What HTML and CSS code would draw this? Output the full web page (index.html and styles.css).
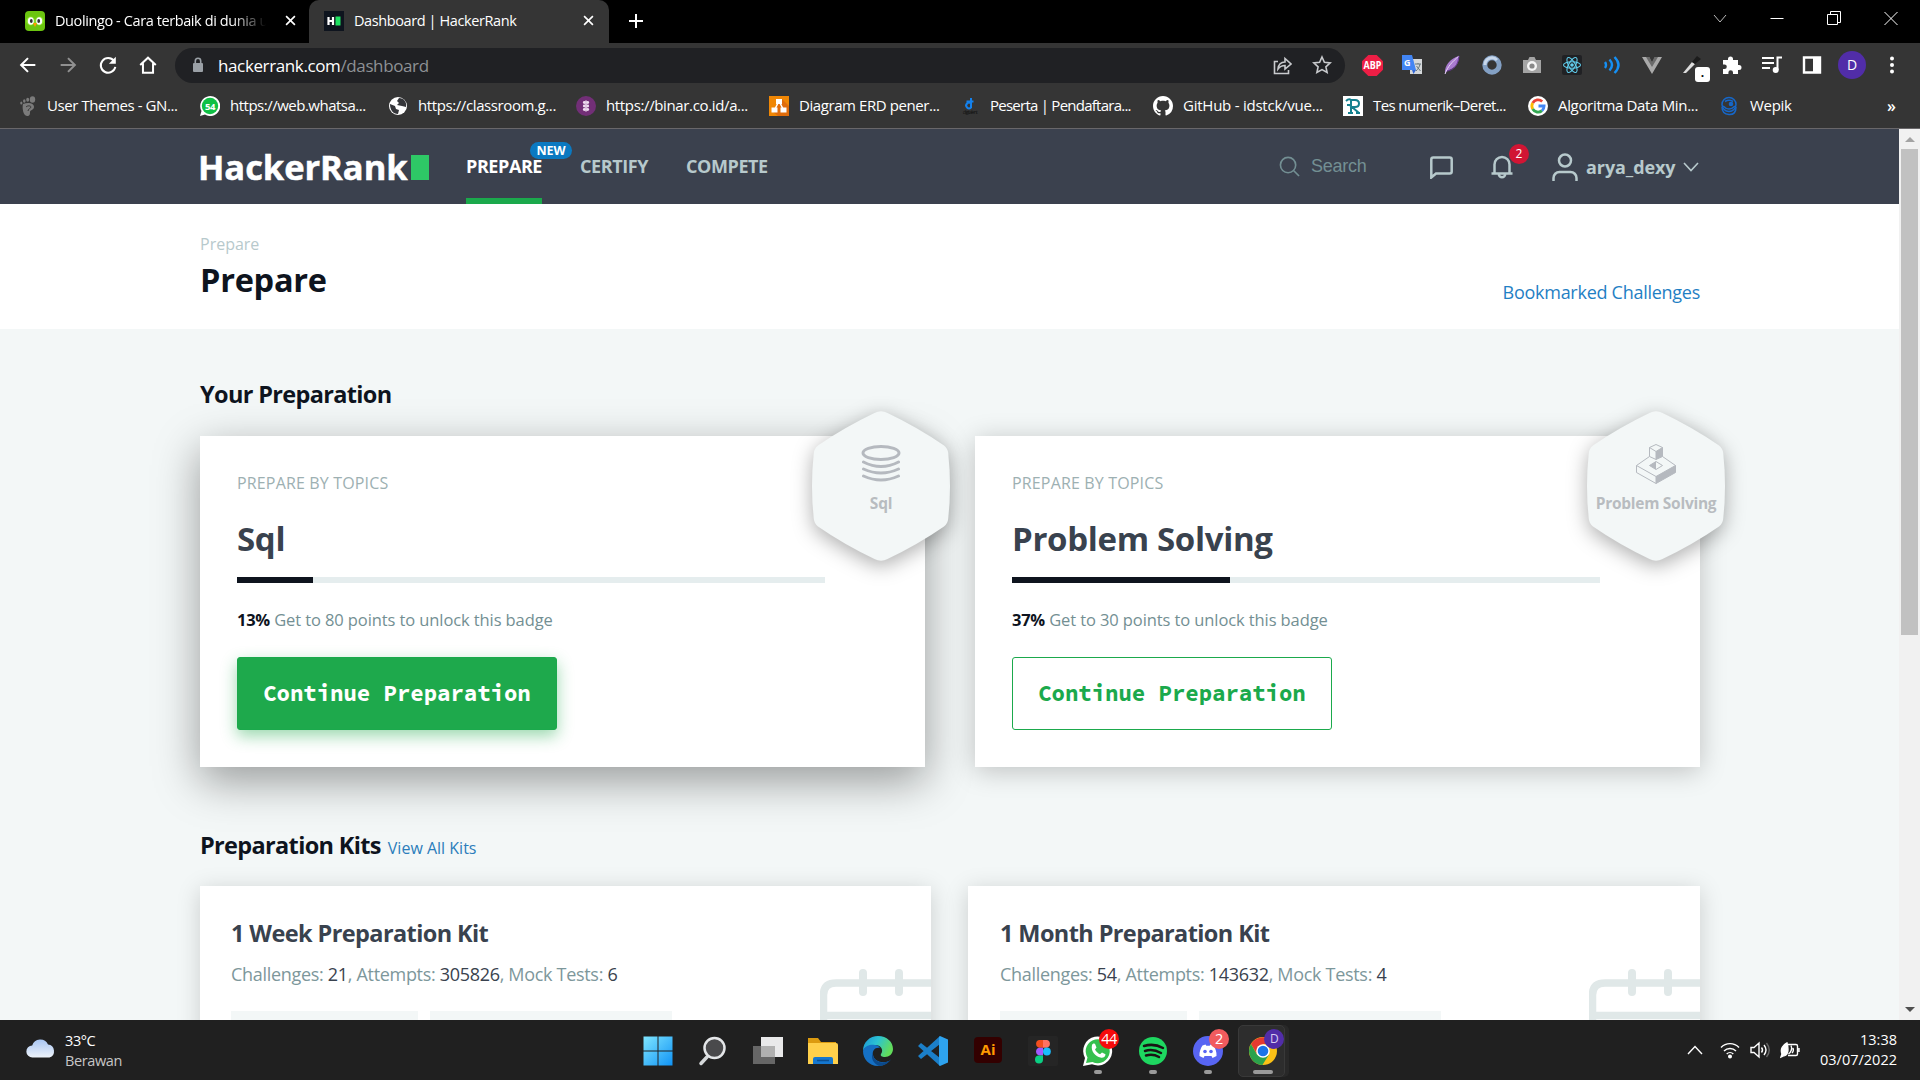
FILE: index.html
```html
<!DOCTYPE html>
<html lang="id">
<head>
<meta charset="utf-8">
<title>Dashboard | HackerRank</title>
<link rel="stylesheet" href="styles.css">
</head>
<body>
<div class="tabs">
  <div class="tab">
    <svg class="fav" viewBox="0 0 20 20"><rect width="20" height="20" rx="4" fill="#6cc510"/><circle cx="5.6" cy="10" r="4.4" fill="#8be02b"/><circle cx="14.4" cy="10" r="4.4" fill="#8be02b"/><ellipse cx="5.8" cy="10" rx="3" ry="3.8" fill="#fff"/><ellipse cx="14.2" cy="10" rx="3" ry="3.8" fill="#fff"/><ellipse cx="6.3" cy="10" rx="1.4" ry="2" fill="#333"/><ellipse cx="13.7" cy="10" rx="1.4" ry="2" fill="#333"/><path d="M8 12h4l-2 4z" fill="#ff9b00"/></svg>
    <span class="tab-title fade">Duolingo - Cara terbaik di dunia u</span>
    <svg class="x" viewBox="0 0 10 10"><path d="M1 1l8 8M9 1l-8 8"/></svg>
  </div>
  <div class="tab active">
    <svg class="fav" viewBox="0 0 20 20"><rect width="20" height="20" fill="#0e141e"/><path d="M4.500 6v8M9 6v8M4.500 10h4.500" stroke="#fff" stroke-width="2.200"/><path d="M11.500 5.500h5v9h-5z" fill="#1ee161"/></svg>
    <span class="tab-title">Dashboard | HackerRank</span>
    <svg class="x" viewBox="0 0 10 10"><path d="M1 1l8 8M9 1l-8 8"/></svg>
  </div>
  <svg class="plus" viewBox="0 0 16 16"><path d="M8 1v14M1 8h14"/></svg>
  <div class="win">
    <svg viewBox="0 0 16 16"><path d="M2 5l6 7 6-7" stroke="#bbb"/></svg>
    <svg viewBox="0 0 16 16"><path d="M1.500 8.500h13"/></svg>
    <svg viewBox="0 0 16 16"><path d="M1.500 4.500h10v10h-10zM4.500 4.500v-3h10v11h-3"/></svg>
    <svg viewBox="0 0 16 16"><path d="M1.500 2l13 13M14.500 2l-13 13"/></svg>
  </div>
</div>
<div class="toolbar">
  <svg class="cell" viewBox="0 0 24 24"><path d="M20 12H5M12 4.500L4.500 12l7.500 7.500" class="w"/></svg>
  <svg class="cell dim" viewBox="0 0 24 24"><path d="M4 12h15M12 4.500l7.500 7.500-7.500 7.500" class="w"/></svg>
  <svg class="cell" viewBox="0 0 24 24"><path d="M18.500 7.500A8 8 0 1 0 20 14" class="w"/><path d="M20.500 3v7.500H13z" fill="#fff"/></svg>
  <svg class="cell" viewBox="0 0 24 24"><path d="M3.500 12L12 4l8.500 8M6.500 10v10.500h11V10" class="w"/></svg>
  <div class="omnibox">
    <svg class="lock" viewBox="0 0 12 16"><rect x="1" y="6" width="10" height="9" rx="1" fill="#9aa0a6"/><path d="M3.300 6V4a2.700 2.700 0 0 1 5.400 0v2" fill="none" stroke="#9aa0a6" stroke-width="1.600"/></svg>
    <span class="url">hackerrank.com<em>/dashboard</em></span>
    <svg class="oi" viewBox="0 0 20 20"><path d="M6 6.500H2.500v12H16.500V15M6 14c.5-5 3.500-7 7-7V3.500L19 9l-6 5v-3.500c-3 0-5 .8-7 3.500z"/></svg>
    <svg class="oi" viewBox="0 0 20 20"><path d="M10 2l2.400 5.300 5.800.6-4.300 3.900 1.200 5.700L10 14.600l-5.100 2.900 1.200-5.700L1.800 7.900l5.800-.6z"/></svg>
  </div>
  <div class="ext">
    <div class="cell"><svg class="big" viewBox="0 0 20 20"><path d="M6 0h8l6 6v8l-6 6H6l-6-6V6z" fill="#ed1e45"/><text x="10" y="13.700" text-anchor="middle" font-size="9.500" textLength="17" lengthAdjust="spacingAndGlyphs" font-weight="700" fill="#fff">ABP</text></svg></div>
    <div class="cell"><svg viewBox="0 0 20 20"><rect x="8" y="4" width="12" height="15" fill="#d5d8da"/><path d="M0 0h10l4 15H0z" fill="#4285f4"/><path d="M10 15h4l-2.500 4z" fill="#3367d6"/><text x="2" y="11" font-size="9" font-weight="700" fill="#fff">G</text><path d="M13 9h6M16 8v1M14 16c2-2 3.500-4 4-7M14.500 11l4 5" stroke="#66777d" fill="none"/></svg></div>
    <div class="cell"><svg viewBox="0 0 20 20"><path d="M3 19C2 10 9 3 17 1c0 8-4 12-12 15z" fill="#a97bd0"/><path d="M3 19C6 11 10 7 17 1" stroke="#e6d4f4" fill="none"/><path d="M5 16c7-1 11-6 12-15" stroke="#6a3a99" fill="none"/></svg></div>
    <div class="cell"><svg viewBox="0 0 20 20"><circle cx="10" cy="10" r="7.200" fill="none" stroke="#83a0c4" stroke-width="5"/><path d="M3 10a7 7 0 0 1 12-5" fill="none" stroke="#c8d8ec" stroke-width="3"/></svg></div>
    <div class="cell"><svg viewBox="0 0 20 20"><path d="M1 5h5l1.500-3h5L14 5h5v13H1z" fill="#a4a4a4"/><circle cx="10" cy="11" r="5" fill="#f5f5f5"/><circle cx="10" cy="11" r="2.600" fill="#888"/></svg></div>
    <div class="cell"><svg viewBox="0 0 20 20"><rect width="20" height="20" rx="2" fill="#202124"/><g fill="none" stroke="#61cfee" stroke-width="1.100"><ellipse cx="10" cy="10" rx="8.500" ry="3.300"/><ellipse cx="10" cy="10" rx="8.500" ry="3.300" transform="rotate(60 10 10)"/><ellipse cx="10" cy="10" rx="8.500" ry="3.300" transform="rotate(120 10 10)"/></g><circle cx="10" cy="10" r="1.800" fill="#61cfee"/></svg></div>
    <div class="cell"><svg viewBox="0 0 20 20"><path d="M3 7q2 3 0 6M7.500 4.500q5 5.500 0 11M12.500 2q8 8 0 16" fill="none" stroke="#1590f5" stroke-width="2.400"/></svg></div>
    <div class="cell"><svg viewBox="0 0 20 20"><path d="M0 2h7l3 6 3-6h7L10 19z" fill="#aaa"/><path d="M4 2h3.500L10 7l2.500-5H16l-6 10z" fill="#6b6b6b"/></svg></div>
    <div class="cell pen"><svg viewBox="0 0 20 20"><path d="M1 18L10 7l3 2L4 18z" fill="#ddd"/><path d="M10 7l5-6 4 3-6 5z" fill="#1c1c1c"/></svg><b class="chip">.</b></div>
    <div class="cell"><svg viewBox="0 0 20 20"><path d="M1 5h5V4a2.500 2.500 0 0 1 5 0v1h5v5h1a2.500 2.500 0 0 1 0 5h-1v4h-5v-1.500a2.300 2.300 0 0 0-4.600 0V19H1v-5h1.500a2.300 2.300 0 0 0 0-4.600H1z" fill="#fff"/></svg></div>
    <div class="cell"><svg viewBox="0 0 20 20"><path d="M0 3h12M0 8h12M0 13h8M15.500 15V2.500H20" fill="none" stroke="#fff" stroke-width="2"/><circle cx="13.700" cy="15" r="3" fill="#fff"/></svg></div>
    <div class="cell"><svg viewBox="0 0 20 20"><path d="M2 2.500h16v15H2z" fill="none" stroke="#fff" stroke-width="2.400"/><path d="M11 2h7v16h-7z" fill="#fff"/></svg></div>
    <div class="cell"><span class="avatar">D</span></div>
    <div class="cell"><svg viewBox="0 0 20 20" fill="#fff"><circle cx="10" cy="3.500" r="2"/><circle cx="10" cy="10" r="2"/><circle cx="10" cy="16.500" r="2"/></svg></div>
  </div>
</div>
<div class="bookmarks">
  <div class="bm b1"><svg viewBox="0 0 20 20" fill="#7b7b7b"><path d="M5 8c5-2 11-1 11 3 0 3-4 3-4 5s0 4-3 4c-4 0-5-9-4-12z"/><ellipse cx="14.500" cy="3.500" rx="2.700" ry="3.300"/><ellipse cx="9.700" cy="3.800" rx="1.500" ry="2"/><ellipse cx="6.300" cy="5" rx="1.300" ry="1.800"/><ellipse cx="3.300" cy="7" rx="1.100" ry="1.600"/><path d="M8 11c2-2 5-1 5 0s-3 2-3 4" fill="none" stroke="#353535"/></svg><span>User Themes - GN...</span></div>
  <div class="bm b2"><svg viewBox="0 0 20 20"><path d="M0 20l1.500-5A10 10 0 1 1 5 18.600z" fill="#fff"/><circle cx="10" cy="10" r="8.200" fill="#10c045"/><text x="10" y="13.500" text-anchor="middle" font-size="9.500" font-weight="700" fill="#fff">54</text></svg><span>https://web.whatsa...</span></div>
  <div class="bm b3"><svg viewBox="0 0 20 20"><circle cx="10" cy="10" r="9" fill="#fff"/><path d="M2 8l5 2 1 3 3 1-1 4c-5 0-8-4-8-10zM11 2l-2 3 2 2-2 2 5 1 4 1c1-5-2-9-7-9z" fill="#35363a"/></svg><span>https://classroom.g...</span></div>
  <div class="bm b4"><svg viewBox="0 0 20 20"><circle cx="10" cy="10" r="10" fill="#722f77"/><path d="M10 4.500v11" stroke="#f1dff2" stroke-width="1.500"/><g fill="#f1dff2"><circle cx="8.300" cy="6.500" r="1.400"/><circle cx="11.700" cy="6.500" r="1.400"/><circle cx="8.300" cy="10" r="1.400"/><circle cx="11.700" cy="10" r="1.400"/><circle cx="8.300" cy="13.500" r="1.400"/><circle cx="11.700" cy="13.500" r="1.400"/></g></svg><span>https://binar.co.id/a...</span></div>
  <div class="bm b5"><svg viewBox="0 0 20 20"><path d="M0 0h20v20H0z" fill="#f08705"/><path d="M13 3l7 7v10H9l-6-5z" fill="#df6c0c"/><path d="M10 5L5.500 14M10 5l4.500 9" stroke="#fff" stroke-width="1.600"/><path d="M7 3h6v5H7zM2.500 11.500h6v5h-6zM11.500 11.500h6v5h-6z" fill="#fff"/></svg><span>Diagram ERD pener...</span></div>
  <div class="bm b6"><svg viewBox="0 0 20 20"><path d="M11 2v10M6.500 5.500h7M11 11.500a2.800 2.800 0 1 1 0-4" fill="none" stroke="#1481ec" stroke-width="2"/><text x="10" y="18" text-anchor="middle" font-size="5" fill="#111">digitalent</text></svg><span>Peserta | Pendaftara...</span></div>
  <div class="bm b7"><svg viewBox="0 0 16 16"><path fill="#fff" d="M8 0C3.580 0 0 3.580 0 8c0 3.540 2.290 6.530 5.470 7.590.4.070.55-.17.55-.38 0-.19-.01-.82-.01-1.490-2.010.37-2.530-.49-2.690-.94-.09-.23-.48-.94-.82-1.130-.28-.15-.68-.52-.01-.53.63-.01 1.080.58 1.230.82.72 1.210 1.870.87 2.330.66.070-.52.28-.87.51-1.070-1.780-.2-3.640-.89-3.640-3.950 0-.87.31-1.590.82-2.150-.08-.2-.36-1.020.08-2.120 0 0 .67-.21 2.200.82.640-.18 1.320-.27 2-.27s1.360.09 2 .27c1.530-1.040 2.200-.82 2.200-.82.44 1.100.16 1.920.08 2.120.51.56.82 1.270.82 2.150 0 3.070-1.870 3.750-3.650 3.950.29.25.54.73.54 1.480 0 1.070-.01 1.930-.01 2.200 0 .21.15.46.55.38A8.010 8.010 0 0 0 16 8c0-4.420-3.580-8-8-8z"/></svg><span>GitHub - idstck/vue...</span></div>
  <div class="bm b8"><svg viewBox="0 0 20 20"><path d="M0 0h20v20H0z" fill="#fff"/><path d="M8 16V4h4q4 0 4 3.500T12 11H9l7 6M3 5q3-3 5-1M4 9h3M5 17h5M13 17h4" fill="none" stroke="#14808f" stroke-width="2"/></svg><span>Tes numerik–Deret...</span></div>
  <div class="bm b9"><svg viewBox="0 0 20 20"><circle cx="10" cy="10" r="10" fill="#fff"/><g fill="none" stroke-width="2.800"><path d="M14.200 5.500A6.100 6.100 0 0 0 4.700 7" stroke="#ea4335"/><path d="M4.700 7a6.100 6.100 0 0 0 0 6" stroke="#fbbc05"/><path d="M4.700 13a6.100 6.100 0 0 0 9.300 1.600" stroke="#34a853"/><path d="M14 14.600A6.100 6.100 0 0 0 16.100 10H10.500" stroke="#4285f4"/></g></svg><span>Algoritma Data Min...</span></div>
  <div class="bm b10"><svg viewBox="0 0 20 20"><g fill="none" stroke="#1667c9" stroke-width="1.500"><circle cx="9" cy="8.500" r="7"/><path d="M2 11q0 7 7 7.500t7-7.500M3 10q6 6 12 0M5 5.500q4-2.500 8 0"/></g><circle cx="11" cy="8" r="2.300" fill="#1667c9"/></svg><span>Wepik</span></div>
  <span class="more">»</span>
</div>

<div class="viewport">
  <div class="page">
    <header class="hr-nav">
      <div class="wrap nav-row">
        <div class="logo"><span>HackerRank</span><i></i></div>
        <nav>
          <a class="on">PREPARE<sup>NEW</sup></a><a>CERTIFY</a><a>COMPETE</a>
        </nav>
        <div class="search"><svg viewBox="0 0 22 22"><circle cx="9.500" cy="9.500" r="8"/><path d="M15.500 15.500l5.500 5.500"/></svg><span>Search</span></div>
        <svg class="chat" viewBox="0 0 24 24"><path d="M2.300 22.500V4.500a2 2 0 0 1 2-2h16.400a2 2 0 0 1 2 2v12a2 2 0 0 1-2 2H7z"/></svg>
        <div class="bell"><svg viewBox="0 0 24 24"><path d="M1.500 18.500h21M4.500 18V9.500a7.500 7.500 0 0 1 15 0V18M8.800 19a3.200 3.200 0 0 0 6.400 0"/></svg><b>2</b></div>
        <svg class="user" viewBox="0 0 26 28"><circle cx="13" cy="7.500" r="6"/><path d="M1.500 28v-3a6 6 0 0 1 6-6h11a6 6 0 0 1 6 6v3"/></svg>
        <span class="uname">arya_dexy</span>
        <svg class="chev" viewBox="0 0 16 10"><path d="M1 1l7 7.500L15 1"/></svg>
      </div>
    </header>
    <section class="head">
      <div class="wrap head-row">
        <div><p class="crumb">Prepare</p><h1>Prepare</h1></div>
        <a class="marked">Bookmarked Challenges</a>
      </div>
    </section>
    <main class="wrap">
      <h2>Your Preparation</h2>
      <div class="topics">
        <article class="topic first">
          <p class="eyebrow">PREPARE BY TOPICS</p>
          <h3>Sql</h3>
          <div class="bar"><i style="width:13%"></i></div>
          <p class="pts"><b>13%</b> Get to 80 points to unlock this badge</p>
          <button class="btn solid">Continue Preparation</button>
          <div class="hex">
            <svg class="shape" viewBox="0 0 138 150"><path d="M62.500 2Q69 -1.500 75.500 2Q106 16.500 132 34.500Q135.500 37 136.200 42Q139.800 75 136.200 108Q135.500 113 132 115.500Q106 133.500 75.500 148Q69 151.500 62.500 148Q32 133.500 6 115.500Q2.500 113 1.800 108Q-1.800 75 1.800 42Q2.500 37 6 34.500Q32 16.500 62.500 2Z"/></svg>
            <svg class="glyph" viewBox="0 0 40 40"><g fill="none" stroke="#b5b9bf" stroke-width="3" stroke-linecap="round"><ellipse cx="20" cy="9" rx="18" ry="6.500"/><path d="M2.500 18q17.500 9 35 0M2.500 25q17.500 8 35 0M2.500 32q17.500 8 35 0"/></g></svg>
            <span>Sql</span>
          </div>
        </article>
        <article class="topic">
          <p class="eyebrow">PREPARE BY TOPICS</p>
          <h3>Problem Solving</h3>
          <div class="bar"><i style="width:37%"></i></div>
          <p class="pts"><b>37%</b> Get to 30 points to unlock this badge</p>
          <button class="btn">Continue Preparation</button>
          <div class="hex">
            <svg class="shape" viewBox="0 0 138 150"><path d="M62.500 2Q69 -1.500 75.500 2Q106 16.500 132 34.500Q135.500 37 136.200 42Q139.800 75 136.200 108Q135.500 113 132 115.500Q106 133.500 75.500 148Q69 151.500 62.500 148Q32 133.500 6 115.500Q2.500 113 1.800 108Q-1.800 75 1.800 42Q2.500 37 6 34.500Q32 16.500 62.500 2Z"/></svg>
            <svg class="glyph" viewBox="0 0 40 40"><g fill="none" stroke="#b5b9bf"><path d="M13.500 12.500L0.500 21.500v7L20 39.500l19.500-11v-7L26.500 12.500M.5 21.500L20 32.500l19.500-11M20 32.500v7"/><path d="M13.500 3.500L20 .5l6.500 3v9L20 15.500l-6.500-3zM13.500 3.500l6.500 4 6.500-4M20 7.500v8M13.500 21.500l6.500-4 6.500 4-6.500 4z"/></g><path d="M20 32.500l19.500-11v7L20 39.500zM20 7.500l6.500-4v9l-6.500 3zM13.500 21.500l6.500-4v8z" fill="#b5b9bf"/></svg>
            <span>Problem Solving</span>
          </div>
        </article>
      </div>
      <div class="kits-head"><h2>Preparation Kits</h2><a>View All Kits</a></div>
      <div class="kits">
        <article class="kit">
          <h4>1 Week Preparation Kit</h4>
          <p>Challenges: <b>21</b>, Attempts: <b>305826</b>, Mock Tests: <b>6</b></p>
          <div class="tags"><i></i><i></i></div>
          <svg class="cal" viewBox="0 0 111 60"><path d="M3.500 60V26Q3.500 14 16 14H111M3.500 46.500H111" fill="none" stroke="#e0e8e8" stroke-width="7.500"/><path d="M43 4v19M79 4v19" stroke="#e0e8e8" stroke-width="8" stroke-linecap="round"/></svg>
        </article>
        <article class="kit">
          <h4>1 Month Preparation Kit</h4>
          <p>Challenges: <b>54</b>, Attempts: <b>143632</b>, Mock Tests: <b>4</b></p>
          <div class="tags"><i></i><i></i></div>
          <svg class="cal" viewBox="0 0 111 60"><path d="M3.500 60V26Q3.500 14 16 14H111M3.500 46.500H111" fill="none" stroke="#e0e8e8" stroke-width="7.500"/><path d="M43 4v19M79 4v19" stroke="#e0e8e8" stroke-width="8" stroke-linecap="round"/></svg>
        </article>
      </div>
    </main>
  </div>
  <div class="scroll"><svg viewBox="0 0 20 20"><path d="M5 13h10l-5-5z" fill="#a3a3a3"/></svg><i></i><svg class="dn" viewBox="0 0 20 20"><path d="M5 7h10l-5 5z" fill="#505050"/></svg></div>
</div>

<footer class="taskbar">
  <div class="weather">
    <svg viewBox="0 0 30 20"><defs><linearGradient id="cl" x1="0" y1="0" x2="0" y2="1"><stop offset="0" stop-color="#a9c6f3"/><stop offset="1" stop-color="#eef3fa"/></linearGradient></defs><path d="M6.500 19.500a6 6 0 0 1-.3-12A8.500 8.500 0 0 1 22 6.500a6.700 6.700 0 0 1 1.500 13z" fill="url(#cl)"/></svg>
    <div><p>33°C</p><p class="g">Berawan</p></div>
  </div>
  <div class="apps">
    <div class="app"><svg viewBox="0 0 30 30"><defs><linearGradient id="wn" x1="0" y1="0" x2="1" y2="1"><stop offset="0" stop-color="#7fe6ff"/><stop offset="1" stop-color="#1093f5"/></linearGradient></defs><path d="M.5.500h14v14H.5zM15.500.500h14v14h-14zM.5 15.500h14v14H.5zM15.500 15.500h14v14h-14z" fill="url(#wn)"/></svg></div>
    <div class="app"><svg viewBox="0 0 30 30"><path d="M9 21L3 27.500" stroke="#d5d8da" stroke-width="3.500" stroke-linecap="round"/><circle cx="16.500" cy="12" r="10" fill="#4a4a4c" stroke="#e4e6e8" stroke-width="2.500"/></svg></div>
    <div class="app"><svg viewBox="0 0 30 30"><path d="M0 10h22v18H0z" fill="#666"/><path d="M8 1h22v20H8z" fill="#e9e9ea"/><path d="M8 10h14v11H8z" fill="#b0b0b0"/></svg></div>
    <div class="app"><svg viewBox="0 0 30 30"><path d="M0 2h10l3 4h15v8H0z" fill="#dc9b10"/><path d="M0 7h28q2 0 2 2v19H0z" fill="#ffd04b"/><path d="M5 28v-5q0-2 2-2h16q2 0 2 2v5z" fill="#1577cf"/><path d="M9 24.500h12" stroke="#0b4f92" stroke-width="1.500"/></svg></div>
    <div class="app"><svg viewBox="0 0 30 30"><defs><linearGradient id="eg" x1="0" y1="0" x2="1" y2=".4"><stop offset="0" stop-color="#1a93d8"/><stop offset=".5" stop-color="#2cc3d2"/><stop offset="1" stop-color="#62dc5b"/></linearGradient></defs><path d="M0 15C0 6 7 0 15 0c9 0 15 6 15 13 0 5-4 8-8 8-3 0-5-1-4-3 3-4 0-9-6-9C6 9 1 12 0 15z" fill="url(#eg)"/><path d="M0 15c1-4 6-7 12-6 2 0 4 1 5 3-5-1-8 3-7 7 1 6 9 9 16 6-3 4-8 5-11 5C6 30 0 23 0 15z" fill="#1570c4"/><path d="M10 17c-1 6 6 11 13 9 2 0 4-2 5-3-2 4-7 7-12 7-5-2-9-8-6-13z" fill="#0c4a8c"/></svg></div>
    <div class="app"><svg viewBox="0 0 30 30"><path d="M22 0v30L0 10l3-3 19 15V8L3 23l-3-3z" fill="#1b7fc9"/><path d="M22 0l8 3.500v23L22 30l-1-1V1z" fill="#2ea3ef"/></svg></div>
    <div class="app"><svg viewBox="0 0 30 30"><rect x="1" y="1" width="28" height="26" rx="4" fill="#330000"/><text x="15" y="19" text-anchor="middle" font-size="15" font-weight="700" fill="#ff9a00">Ai</text></svg></div>
    <div class="app"><svg viewBox="0 0 30 30"><rect width="30" height="30" rx="2" fill="#252525"/><path d="M15 4h-4a4 4 0 0 0 0 7.700h4z" fill="#f24e1e"/><path d="M15 4h4a4 4 0 0 1 0 7.700h-4z" fill="#ff7262"/><path d="M15 11.700h-4a4 4 0 0 0 0 7.700h4z" fill="#a259ff"/><circle cx="18.900" cy="15.500" r="3.900" fill="#1abcfe"/><path d="M15 19.400h-4a4 4 0 1 0 4 4z" fill="#0acf83"/></svg></div>
    <div class="app run"><svg viewBox="0 0 30 30"><path d="M0 30l2-8A14.500 14.500 0 1 1 9 28.300z" fill="#fff"/><path d="M3 27l1.500-5.500A12 12 0 1 1 9.500 26z" fill="#35c04e"/><path d="M9 9c1-2 3-2 3.500 0l1 2.500-1.500 2c1 2 3 4 5 4.700l2-1.700 3.500 1.700c0 3-3 4-5 3.300-5-1-10-6-8.500-12.500z" fill="#fff"/></svg><b class="n red">44</b></div>
    <div class="app run"><svg viewBox="0 0 30 30"><circle cx="15" cy="15" r="14" fill="#1ed760"/><path d="M6 10q10-3 19 2M7 15q8-2.500 16 2M8 19.500q7-2 13 1.500" fill="none" stroke="#191414" stroke-width="2.500" stroke-linecap="round"/></svg></div>
    <div class="app run"><svg viewBox="0 0 30 30"><circle cx="15" cy="15" r="15" fill="#5865f2"/><path d="M9.500 9.500l3-1 .8 1.300h3.400l.8-1.300 3 1c2 3 3.300 6.500 3 10.500L19.500 22l-1-2h-7l-1 2-4-2c-.3-4 1-7.500 3-10.500z" fill="#fff"/><circle cx="12" cy="15.500" r="1.800" fill="#5865f2"/><circle cx="18" cy="15.500" r="1.800" fill="#5865f2"/></svg><b class="n pink">2</b></div>
    <div class="app run cur"><svg viewBox="0 0 30 30"><circle cx="15" cy="15" r="14" fill="#fbc116"/><path d="M15 8h12.100A14 14 0 0 0 3 8l6 10z" fill="#e53a2f"/><path d="M2.900 8a14 14 0 0 0 11.500 21L21 18.500 9 18.500z" fill="#2ba24c"/><circle cx="15" cy="15" r="6.800" fill="#fff"/><circle cx="15" cy="15" r="5.300" fill="#1a73e8"/></svg><b class="n violet">D</b></div>
  </div>
  <div class="tray">
    <svg class="up" viewBox="0 0 16 10"><path d="M1 9l7-7.500L15 9"/></svg>
    <svg class="t1" viewBox="0 0 20 18"><path d="M1 6.500a12.500 12.500 0 0 1 18 0M4 10a8.500 8.500 0 0 1 12 0M6.700 13a4.700 4.700 0 0 1 6.600 0"/><circle cx="10" cy="15.500" r="1.300" fill="#fff"/></svg>
    <svg class="t2" viewBox="0 0 20 18"><path d="M1 6.500h3l5-4.500v14l-5-4.500H1zM11.500 6.500q2 2.500 0 5M14 4q4 5 0 10"/><path d="M16.500 2q5.500 7 0 14" stroke="#666"/></svg>
    <svg class="t3" viewBox="0 0 20 18"><path d="M8 3.500h8q1.500 0 1.500 1.500v8q0 1.500-1.500 1.500H8M19 7v4"/><path d="M7 2C3 4 0 8 2 13l-1 3 2-1c5 0 6-6 4-13z" fill="#fff"/><path d="M11 4.500c1.500 3 0 7-2.500 8.500M13 7q1 3-1 5"/></svg>
    <div class="clock"><p>13:38</p><p>03/07/2022</p></div>
  </div>
</footer>
</body>
</html>
```
FILE: styles.css
```css
* { box-sizing: border-box; }
body { margin: 0; width: 1920px; height: 1080px; overflow: hidden; display: flex; flex-direction: column; background: #000; font-family: "Open Sans", "Noto Sans", sans-serif; }
p, h1, h2, h3, h4 { margin: 0; }
svg { display: block; flex: none; }
svg text { font-family: "Open Sans", sans-serif; }

/* tab strip */
.tabs { height: 43px; flex: none; display: flex; align-items: stretch; color: #fff; font-size: 14.5px; }
.tab { width: 309px; padding: 0 13px 2px 25px; display: flex; align-items: center; gap: 10px; }
.tab.active { width: 300px; padding: 0 15px 2px; background: #353535; border-radius: 10px 10px 0 0; }
.fav { width: 20px; height: 20px; }
.tab-title { flex: 1; white-space: nowrap; overflow: hidden; letter-spacing: -.4px; line-height: 20px; }
.fade { -webkit-mask-image: linear-gradient(90deg, #000 80%, transparent 96%); mask-image: linear-gradient(90deg, #000 80%, transparent 96%); }
.x { width: 11px; height: 11px; stroke: #fff; stroke-width: 1.5; fill: none; }
.plus { width: 16px; height: 16px; margin: 13px 0 0 19px; stroke: #fff; stroke-width: 2; }
.win { margin-left: auto; display: flex; }
.win svg { width: 16px; height: 16px; margin: 10px 21px 0 20px; stroke: #fff; fill: none; }

/* toolbar */
.toolbar { height: 44px; flex: none; background: #353535; display: flex; align-items: center; padding-left: 8px; }
.toolbar > .cell { width: 40px; height: 22px; }
.w { fill: none; stroke: #fff; stroke-width: 2.2; }
.dim { opacity: .45; }
.omnibox { margin: 0 7px; width: 1170px; height: 35px; border-radius: 18px; background: #202124; display: flex; align-items: center; padding-left: 17px; }
.lock { width: 12px; height: 16px; }
.url { margin-left: 14px; flex: 1; font-size: 17px; color: #fff; letter-spacing: -.38px; line-height: 22px; padding-top: 1px; }
.url em { font-style: normal; color: #8e9195; }
.oi { width: 20px; height: 20px; margin-right: 20px; fill: none; stroke: #c8cacd; stroke-width: 1.6; }
.oi + .oi { margin-right: 13px; }
.ext { display: flex; }
.ext .cell { width: 40px; height: 28px; display: flex; align-items: center; justify-content: center; position: relative; }
.ext svg { width: 20px; height: 20px; }
.ext .big { width: 21px; height: 21px; }
.chip { position: absolute; right: 2px; bottom: -3px; width: 15px; height: 15px; border-radius: 3px; background: #fff; color: #000; font-size: 12px; line-height: 11px; text-align: center; }
.avatar { width: 28px; height: 28px; border-radius: 50%; background: #512da8; color: #fff; font-size: 14px; line-height: 28px; text-align: center; }

/* bookmarks */
.bookmarks { height: 42px; flex: none; background: #353535; border-bottom: 1px solid #69676a; display: flex; align-items: center; padding: 0 24px 4px 18px; color: #fff; font-size: 15px; line-height: 20px; white-space: nowrap; }
.bm { display: flex; align-items: center; gap: 10px; }
.bm svg { width: 20px; height: 20px; }
.bm span { margin-top: -1px; }
.b1 { width: 182px; gap: 9px; letter-spacing: -.42px; }
.b2 { width: 188px; letter-spacing: -.5px; }
.b3 { width: 188px; letter-spacing: -.4px; }
.b4 { width: 193px; letter-spacing: -.36px; }
.b5 { width: 191px; letter-spacing: -.42px; }
.b6 { width: 193px; letter-spacing: -.75px; }
.b7 { width: 190px; letter-spacing: -.24px; }
.b8 { width: 185px; letter-spacing: -.6px; }
.b9 { width: 192px; letter-spacing: -.33px; }
.b10 { letter-spacing: -.3px; }
.more { margin-left: auto; font-size: 16px; font-weight: 600; }

/* page */
.viewport { height: 891px; flex: none; display: flex; overflow: hidden; }
.page { width: 1899px; height: 891px; overflow: hidden; background: #f3f7f7; color: #0e141e; }
.wrap { width: 1500px; margin: 0 199px 0 200px; }
.hr-nav { height: 75px; background: #3b414e; overflow: hidden; }
.nav-row { height: 75px; display: flex; align-items: center; color: #b7c9cc; }
.logo { width: 229px; display: flex; align-items: center; justify-content: space-between; color: #fff; font-size: 34.5px; font-weight: 700; line-height: 40px; -webkit-text-stroke: .5px #fff; }
.logo span { letter-spacing: -.05px; margin-left: -2px; }
.logo i { width: 18px; height: 25px; margin-top: 2px; background: #2ec866; }
nav { display: flex; gap: 38px; margin-left: 37px; font-size: 18px; font-weight: 700; line-height: 75px; }
nav a { position: relative; height: 75px; letter-spacing: -.42px; }
nav .on { color: #fff; border-bottom: 6px solid #1ba94c; }
nav sup { position: absolute; left: 64px; top: 13px; width: 42px; height: 17px; border-radius: 9px; background: #0b79c1; font-size: 12.5px; line-height: 17px; text-align: center; letter-spacing: 0; }
.search { margin-left: auto; display: flex; align-items: center; gap: 11px; color: #738f93; font: 18px "Liberation Sans", Arial, sans-serif; letter-spacing: -.25px; width: 150px; }
.search svg { width: 21px; height: 21px; fill: none; stroke: #738f93; stroke-width: 1.7; }
.chat { width: 24px; height: 24px; }
.chat, .bell svg, .user, .chev { fill: none; stroke: #b7c9cc; stroke-width: 2.5; }
.bell { position: relative; margin-left: 37px; width: 24px; }
.bell svg { width: 24px; height: 24px; }
.bell b { position: absolute; left: 19px; top: -11px; width: 20px; height: 20px; border-radius: 50%; background: #d11534; color: #fff; font-size: 12px; font-weight: 400; line-height: 20px; text-align: center; }
.user { width: 26px; height: 28px; margin-left: 38px; }
.uname { margin-left: 8px; width: 97px; font-size: 18px; font-weight: 700; letter-spacing: -.08px; }
.chev { width: 16px; height: 10px; margin-right: 1px; stroke-width: 1.6; }
.head { height: 125px; background: #fff; overflow: hidden; }
.head-row { height: 125px; display: flex; justify-content: space-between; }
.crumb { margin-top: 28px; font-size: 16px; line-height: 24px; color: #b7c9cc; }
h1 { font-size: 32.5px; font-weight: 700; line-height: 46px; letter-spacing: -.25px; margin-top: 1px; }
.marked { margin-top: 75px; font-size: 18px; letter-spacing: -.27px; line-height: 26px; color: #1f80c4; }
main { padding-top: 1px; }
h2 { font-size: 23.5px; font-weight: 700; line-height: 32px; letter-spacing: -.66px; }
main > h2 { margin-top: 48px; }
.topics { display: flex; gap: 50px; margin-top: 26px; }
.topic { position: relative; width: 725px; height: 331px; padding: 35px 37px 37px; background: #fff; box-shadow: 0 4px 25px rgba(0,0,0,.22); }
.topic.first { box-shadow: 0 14px 42px rgba(0,0,0,.38); }
.eyebrow { font-size: 16px; line-height: 24px; letter-spacing: .16px; color: #9db0b2; }
h3 { margin-top: 21px; font-size: 33px; font-weight: 700; line-height: 46px; letter-spacing: -.32px; color: #39424e; }
.bar { margin-top: 15px; width: 588px; height: 6px; background: #e5edee; }
.bar i { display: block; height: 6px; background: #0e141e; }
.pts { margin-top: 24px; font-size: 16.5px; line-height: 26px; letter-spacing: -.1px; color: #738f93; white-space: nowrap; }
.pts b { color: #0e141e; font-weight: 700; letter-spacing: -.25px; }
.btn { display: block; margin-top: 24px; width: 320px; height: 73px; padding: 0 0 1px; border: 1px solid #1ba94c; border-radius: 3px; background: #fff; color: #1ba94c; font: 700 22.4px "Source Code Pro", "Noto Sans Mono CJK SC", "DejaVu Sans Mono", monospace; letter-spacing: -.06px; }
.btn.solid { background: #1ea94c; color: #fff; box-shadow: 0 6px 16px rgba(30,169,76,.45); }
.hex { position: absolute; left: 612px; top: -25px; width: 138px; height: 150px; display: flex; flex-direction: column; align-items: center; }
.shape { position: absolute; left: 0; top: 0; width: 138px; height: 150px; overflow: visible; fill: #f3f7f7; filter: drop-shadow(0 5px 10px rgba(0,0,0,.32)); }
.glyph { position: relative; width: 40px; height: 40px; margin-top: 33px; }
.hex span { position: relative; margin-top: 7px; font-size: 15.5px; line-height: 24px; font-weight: 700; letter-spacing: -.27px; color: #b8bcc0; white-space: nowrap; }
.kits-head { margin-top: 62px; display: flex; align-items: baseline; gap: 7px; }
.kits-head a { font-size: 16px; color: #2b7dbb; }
.kits { display: flex; gap: 37px; margin-top: 25px; }
.kit { position: relative; width: 731px; height: 300px; padding: 31px; background: #fff; box-shadow: 0 4px 22px rgba(0,0,0,.17); }
.kit + .kit { width: 732px; padding-left: 32px; }
h4 { font-size: 23.5px; font-weight: 700; line-height: 32px; color: #39424e; letter-spacing: -.6px; }
.kit p { margin-top: 11px; font-size: 18px; letter-spacing: -.31px; line-height: 28px; color: #7d979b; }
.kit p b { font-weight: 400; color: #39424e; }
.tags { display: flex; gap: 12px; margin-top: 23px; }
.tags i { width: 187px; height: 40px; background: #f3f7f7; }
.tags i + i { width: 242px; }
.cal { position: absolute; right: 0; top: 83px; width: 111px; height: 60px; }
.scroll { width: 21px; background: #f1f1f1; display: flex; flex-direction: column; align-items: center; }
.scroll svg { width: 20px; height: 20px; }
.scroll i { width: 17px; height: 486px; background: #c1c1c1; }
.dn { margin-top: auto; }

/* taskbar */
.taskbar { height: 60px; flex: none; background: #202020; display: flex; color: #fff; font-size: 14.5px; line-height: 20px; }
.weather { width: 630px; padding: 11px 0 0 26px; display: flex; gap: 9px; }
.weather svg { width: 30px; height: 20px; margin-top: 7px; }
.weather p { letter-spacing: -.4px; }
.weather .g { color: #c6c6c6; }
.apps { display: flex; }
.app { position: relative; width: 55px; height: 60px; padding: 16px 12.5px 0; }
.app svg { position: relative; width: 30px; height: 30px; }
.run::after { content: ""; position: absolute; left: 24px; top: 50px; width: 8px; height: 4px; border-radius: 2px; background: #9a9a9a; }
.cur::after { left: 18px; width: 20px; }
.cur::before { content: ""; position: absolute; left: 3px; top: 5px; width: 45px; height: 50px; border-radius: 5px; background: #2d2d2d; border: 1px solid #393939; box-shadow: 4px 0 0 #282828; }
.n { position: absolute; left: 29px; top: 9px; width: 20px; height: 20px; border-radius: 50%; font-weight: 400; line-height: 20px; text-align: center; letter-spacing: -.5px; }
.red { background: #f50b0b; }
.pink { background: #f15b5e; }
.violet { background: #512da8; font-size: 12px; color: #d8cdf0; }
.tray { margin-left: auto; padding-right: 23px; display: flex; align-items: center; }
.tray svg { fill: none; stroke: #fff; stroke-width: 1.4; }
.up { width: 16px; height: 10px; margin-right: 17px; }
.t1, .t2, .t3 { width: 20px; height: 18px; }
.t2 { margin: 0 10px; }
.clock { width: 97px; text-align: right; letter-spacing: 0; }
```
